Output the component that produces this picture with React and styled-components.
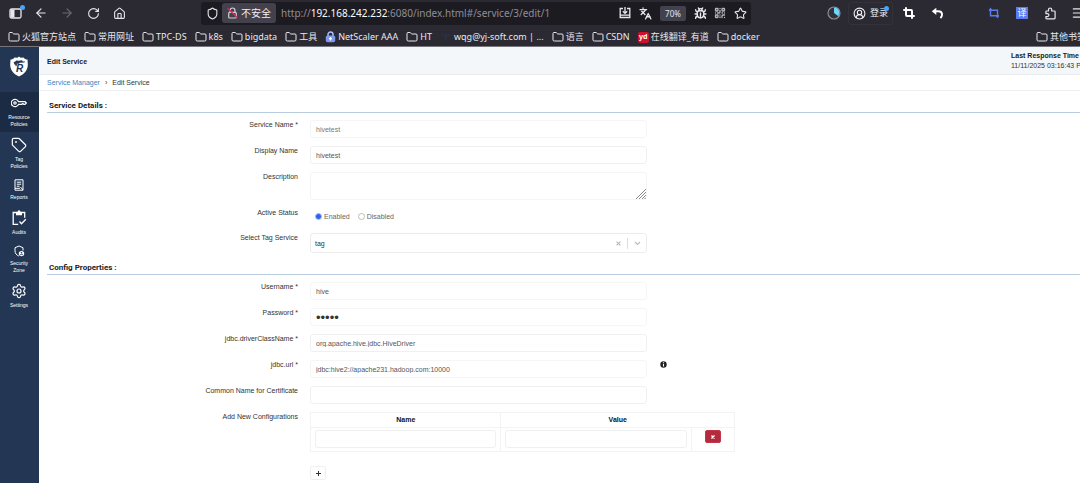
import React from "react";
import styled, { createGlobalStyle, css } from "styled-components";
import {
  ArrowLeft, ArrowRight, RotateCw, House, Shield, Folder, Bug, Star,
  CircleUserRound, Menu, Crop, Tag, Settings, QrCode, Languages,
} from "lucide-react";

const GlobalStyle = createGlobalStyle`
  * { box-sizing: border-box; }
  body {
    margin: 0;
    background: #fff;
    color: #333;
    font: 7px/9px "Liberation Sans", Arial, sans-serif;
    overflow: hidden;
  }
  button, input, select, textarea { font: inherit; color: inherit; margin: 0; }
  svg { flex: none; }
`;

/* ---------- browser window ---------- */

const Browser = styled.header`
  background: #2b2a33;
  color: #e8e8ec;
  border-bottom: 1px solid #77767d;
  font: 10px/20px "Noto Sans", "Noto Sans CJK SC", sans-serif;
  white-space: nowrap;
  overflow: hidden;
`;

const Toolbar = styled.div`
  display: flex;
  align-items: center;
  height: 26px;
  padding-left: 2px;
`;

const ToolButton = styled.button`
  flex: none;
  display: flex;
  align-items: center;
  justify-content: center;
  position: relative;
  width: ${(p) => p.$w || 26}px;
  height: 22px;
  padding: 0;
  border: 0;
  background: none;
  color: ${(p) => p.$color || "#e8e8ec"};
`;

const NavGroup = styled.nav`
  display: flex;
  flex: none;
  width: 199px;
`;

const Dot = styled.i`
  position: absolute;
  top: 3px;
  right: 3px;
  width: 5px;
  height: 5px;
  border-radius: 50%;
  background: #4aa3f5;
`;

const AddressBar = styled.div`
  flex: 1;
  min-width: 0;
  display: flex;
  align-items: center;
  height: 23px;
  padding: 0 1px;
  border-radius: 3px;
  background: #1c1b22;
`;

const Insecure = styled.button`
  flex: none;
  display: flex;
  align-items: center;
  gap: 3px;
  height: 20px;
  padding: 0 5px;
  border: 0;
  border-radius: 3px;
  background: #42414d;
  color: #f0f0f4;
`;

const Address = styled.span`
  flex: 1;
  min-width: 0;
  overflow: hidden;
  padding-left: 5px;
  color: #8f8e96;
  b { font-weight: 400; color: #fbfbfe; }
`;

const ZoomLevel = styled.button`
  flex: none;
  width: 26px;
  height: 15px;
  margin: 0 4px 0 5px;
  padding: 0;
  border: 0;
  border-radius: 2px;
  background: #42414d;
  color: #e8e8ec;
  font-size: 8px;
  line-height: 15px;
`;

const ToolGroup = styled.div`
  flex: none;
  display: flex;
  align-items: center;
  width: 329px;
  padding-left: 69px;
`;

const Account = styled.button`
  flex: none;
  position: relative;
  display: flex;
  align-items: center;
  gap: 4px;
  width: 45px;
  height: 23px;
  margin-right: 2px;
  padding: 0 4px;
  border: 1px solid #33323b;
  border-radius: 3px;
  background: none;
  color: #f0f0f4;
  font-size: 9px;
`;

const ToolSpace = styled.span`
  flex: 0 0 29px;
`;

const Translate = styled.span`
  width: 12px;
  height: 12px;
  background: #5b7cf0;
  color: #fff;
  font-size: 9px;
  line-height: 12px;
`;

const Bookmarks = styled.nav`
  display: flex;
  align-items: center;
  gap: 8px;
  height: 20px;
  padding: 2px 0 0 8px;
`;

const Bookmark = styled.a`
  flex: none;
  display: flex;
  align-items: center;
  gap: 2px;
  color: #e8e8ec;
  font-size: 9px;
  line-height: 18px;
  text-decoration: none;
  ${(p) => p.$last && css`
    width: 44px;
    margin-left: auto;
  `}
`;

const YdIcon = styled.span`
  width: 11px;
  height: 11px;
  border-radius: 2px;
  background: #cf1130;
  color: #fff;
  font-size: 7px;
  font-weight: 700;
  line-height: 10px;
  text-align: center;
`;

/* ---------- application ---------- */

const Shell = styled.div`
  display: flex;
  align-items: stretch;
  min-height: calc(100vh - 47px);
`;

const Sidebar = styled.nav`
  flex: 0 0 39px;
  background: #233755;
`;

const Brand = styled.a`
  display: flex;
  justify-content: center;
  height: 45px;
  padding: 9px 2px 0 0;
`;

const SideLink = styled.a`
  display: flex;
  flex-direction: column;
  align-items: center;
  gap: 3px;
  margin-bottom: 2px;
  padding: 3px 1px 4px 0;
  background: ${(p) => (p.$active ? "#1b2b44" : "transparent")};
  color: #fff;
  font-size: 5px;
  line-height: 7px;
  text-align: center;
  text-decoration: none;
  svg { display: block; }
`;

const Main = styled.main`
  flex: 1;
  min-width: 0;
`;

const TitleBar = styled.div`
  display: flex;
  justify-content: space-between;
  align-items: center;
  height: 28px;
  padding: 1px 0 0 8px;
  border-bottom: 1px solid #e9edef;
  background: #f3f7f9;
  overflow: hidden;
`;

const Title = styled.h1`
  margin: 0;
  font-size: 7px;
  color: #222;
`;

const Response = styled.div`
  flex: none;
  width: 69px;
  white-space: nowrap;
  line-height: 10px;
  b { display: block; color: #222; }
`;

const Crumbs = styled.nav`
  display: flex;
  align-items: center;
  gap: 5px;
  height: 16px;
  padding: 0 8px 1px;
  border-bottom: 1px solid #f0f0f0;
  a { color: #3d85bd; text-decoration: none; }
`;

const Form = styled.form`
  padding-left: 8px;
`;

const Section = styled.section`
  padding-top: 9px;
`;

const SectionTitle = styled.h2`
  margin: 0 0 7px;
  padding-left: 2px;
  border-bottom: 1px solid #b8cde0;
  color: #222;
  font: 700 8px/12px Roboto, "Liberation Sans", sans-serif;
`;

const Rows = styled.div`
  display: grid;
  gap: 8px;
`;

const Row = styled.div`
  display: grid;
  grid-template-columns: 251fr 337fr 421fr;
  column-gap: 12px;
  align-items: start;
`;

const label = css`
  color: #333;
  font-size: 7px;
  line-height: 10px;
  text-align: right;
`;

const Label = styled.label`${label}`;
const LabelText = styled.span`${label}`;

const Input = styled.input`
  display: block;
  width: 100%;
  height: 18px;
  padding: 0 5px;
  border: 1px solid ${(p) => (p.$soft ? "#f6f6f6" : "#f0f0f0")};
  border-radius: 3px;
  outline: 0;
  background: #fff;
  color: ${(p) => (p.$muted ? "#777" : "#555")};
  &[type="password"] { font-size: 13px; color: #333; }
`;

const AreaWrap = styled.div`
  position: relative;
  height: 28px;
`;

const Area = styled.textarea`
  display: block;
  width: 100%;
  height: 28px;
  padding: 4px 5px;
  border: 1px solid #f5f5f5;
  border-radius: 3px;
  outline: 0;
  resize: none;
`;

const Grip = styled.svg`
  position: absolute;
  right: 1px;
  bottom: 1px;
`;

const Radios = styled.div`
  display: flex;
  align-items: center;
  gap: 8px;
  height: 17px;
  padding-left: 5px;
`;

const RadioLabel = styled.label`
  display: flex;
  align-items: center;
  gap: 2px;
  color: #666;
`;

const Radio = styled.input`
  appearance: none;
  width: 7px;
  height: 7px;
  border: 1px solid #bbb;
  border-radius: 50%;
  background: #fff;
  &:checked {
    border-color: #a9bef6;
    background: #2f62ea;
  }
`;

const SelectBox = styled.div`
  display: flex;
  align-items: center;
  height: 20px;
  border: 1px solid #ececec;
  border-radius: 3px;
  color: #bbb;
`;

const Select = styled.select`
  flex: 1;
  min-width: 0;
  height: 18px;
  padding: 0 4px;
  border: 0;
  outline: 0;
  appearance: none;
  background: none;
  color: #333;
`;

const PlainButton = styled.button`
  display: flex;
  align-items: center;
  justify-content: center;
  width: 18px;
  height: 12px;
  padding: 0;
  border: 0;
  background: none;
`;

const Divider = styled.span`
  width: 1px;
  height: 11px;
  background: #ddd;
`;

const Info = styled.span`
  display: flex;
  padding: 1px 0 0 1px;
`;

const Wide = styled.div`
  grid-column: 2 / 4;
`;

const Table = styled.table`
  width: 425px;
  max-width: 100%;
  table-layout: fixed;
  border-collapse: collapse;
  th, td { border: 1px solid #f3f3f3; padding: 2px 4px 3px; vertical-align: top; }
  th { color: #111; }
`;

const RemoveCol = styled.col`
  width: 43px;
`;

const Remove = styled.button`
  display: flex;
  align-items: center;
  justify-content: center;
  width: 16px;
  height: 13px;
  margin: 0 auto;
  padding: 0;
  border: 1px solid #c4374b;
  border-radius: 2px;
  background: #b52b3e;
  color: #fff;
`;

const Add = styled.button`
  display: flex;
  align-items: center;
  justify-content: center;
  width: 16px;
  height: 14px;
  margin-top: 14px;
  padding: 0;
  border: 1px solid #f0f0f0;
  border-radius: 2px;
  background: #fff;
  color: #333;
`;

/* ---------- drawings ---------- */

const SidebarToggle = () => (
  <svg width="13" height="11" viewBox="0 0 13 11">
    <rect x="1" y="1" width="11" height="9" rx="1.5" fill="none" stroke="#e8e8ec" strokeWidth="1.3" />
    <rect x="1.5" y="1.5" width="4" height="8" fill="#e8e8ec" />
  </svg>
);

const LockOff = () => (
  <svg width="11" height="12" viewBox="0 0 11 12" fill="none">
    <path d="M3 5V3.5a2.5 2.5 0 0 1 5 0V5" stroke="#cfcfd6" strokeWidth="1.2" />
    <rect x="1.7" y="5.4" width="7.6" height="5.6" rx="1" stroke="#cfcfd6" strokeWidth="1.2" />
    <path d="M0.5 1.2l10 9.5" stroke="#e22850" strokeWidth="1.3" />
  </svg>
);

const SaveIcon = () => (
  <svg width="12" height="12" viewBox="0 0 12 12" fill="none" stroke="#e8e8ec" strokeWidth="1.3">
    <path d="M4 1.5H1.2v9h9.6v-9H8M6 0v6M3.8 4.2L6 6.4l2.2-2.2M1.2 8.2h9.6" />
  </svg>
);

const Pie = () => (
  <svg width="14" height="14" viewBox="0 0 14 14">
    <circle cx="7" cy="7" r="6" fill="#32313b" stroke="#8d8c95" strokeWidth="1.2" />
    <path d="M7 7V1.6a5.4 5.4 0 0 1 4.4 8.6z" fill="#6fd6f7" />
  </svg>
);

const Undo = () => (
  <svg width="12" height="12" viewBox="0 0 12 12" fill="none">
    <path d="M4 4.3h3.2c5 0 4.4 4.6 2.2 6.7" stroke="#fff" strokeWidth="1.9" />
    <path d="M5.3.7v7.2L.8 4.3z" fill="#fff" />
  </svg>
);

const Region = () => (
  <svg width="12" height="12" viewBox="0 0 12 12" fill="none" stroke="#5b7cf0" strokeWidth="1.4">
    <path d="M2.500 1.500v7.300H11M1 3.200h8.500v7.300" />
    <path d="M.8 3.200L2.500.5l1.700 2.700zM7.800 8.800l1.700 2.700 1.700-2.700z" fill="#5b7cf0" stroke="none" />
  </svg>
);

const Extension = () => (
  <svg width="12" height="13" viewBox="0 0 12 13" fill="none" stroke="#e8e8ec" strokeWidth="1.2" strokeLinejoin="round">
    <path d="M4.500 4V2.600a1.600 1.600 0 0 1 3.200 0V4h2.600q.8 0 .8.800v6.300q0 .8-.8.800H2.700q-.8 0-.8-.8V9.600h1.500a1.500 1.500 0 0 0 0-3H1.900V4.800q0-.8.8-.8z" />
  </svg>
);

const PadlockBadge = () => (
  <svg width="11" height="12" viewBox="0 0 11 12">
    <path d="M3 5V3.500a2.500 2.500 0 0 1 5 0V5" fill="none" stroke="#a9bdf5" strokeWidth="1.5" />
    <rect x=".8" y="4.5" width="9.4" height="6.8" rx="1.8" fill="#7f9aec" />
    <path d="M5.500 6v3.500M4 7.700h3" stroke="#fff" strokeWidth="1.2" />
  </svg>
);

const Faint = () => (
  <svg width="12" height="11" viewBox="0 0 12 11">
    <path d="M2 3h3l1 1.500L7 3h3M6 5v4" fill="none" stroke="#293049" strokeWidth="1.5" />
  </svg>
);

const Logo = () => (
  <svg width="20" height="21" viewBox="0 0 20 21">
    <path d="M10 .5l1.500 1.300 3-.3c1 1.500 2.500 2 4 2l.3 5c0 6-3.500 9.500-8.800 12C4.700 18 1.200 14.500 1.200 8.500l.3-5c1.500 0 3-.5 4-2l3 .3z" fill="#fff" />
    <path d="M4.500 6.300l2.200-1 .4-.9 2.700.4 3.200-.6.8 1.300 2.200.1-.5 1-4.700.2-.8 1H7.600l.6 1.500-1.500 1-.5-1.700-1.300-.4.3-1.100z" fill="#233755" />
    <text x="7" y="15.500" fill="#233755" fontFamily="Liberation Sans" fontStyle="italic" fontWeight="700" fontSize="10">R</text>
  </svg>
);

const KeyIcon = () => (
  <svg width="16" height="16" viewBox="0 0 16 16" fill="none" stroke="#fff" strokeWidth="1.2">
    <path d="M7.600 6.700a3.800 3.600 0 1 0 0 2.600h3.200l1-.8 1 .8h1.200L15.400 8 14 6.700z" />
    <circle cx="4" cy="8" r="1.2" />
  </svg>
);

const ReportIcon = () => (
  <svg width="12" height="12" viewBox="0 0 12 12" fill="none" stroke="#fff">
    <path d="M2 .8h8v10.400H2zM3.800 3.200h4.400M3.800 5.200h4.400M3.800 7.200h2.700M2 9.300h5M7.500 8l2.500 3" />
  </svg>
);

const AuditIcon = () => (
  <svg width="16" height="16" viewBox="0 0 16 16" fill="none" stroke="#fff" strokeWidth="1.3">
    <path d="M5 2.500H2.200v11.800h5M11 2.500h2.700v5.200M8.500 11.500l2 2.200 4.300-4.500" />
    <path d="M5 1.800h1.500a1.500 1.500 0 0 1 3 0H11v3.500H5z" fill="#fff" stroke="none" />
  </svg>
);

const ZoneIcon = () => (
  <svg width="12" height="12" viewBox="0 0 12 12" fill="none" stroke="#fff">
    <path d="M10 5.500V2.700L6 1 2 2.700v3.100c0 2.500 1.400 4.300 3.800 5.200" />
    <circle cx="8.500" cy="8.600" r="2.700" fill="#fff" stroke="none" />
    <circle cx="8.500" cy="7.700" r=".8" fill="#233755" stroke="none" />
    <path d="M7.200 9.800q1.300-1 2.600 0" stroke="#233755" />
  </svg>
);

const Cross = ({ size = 5, width = 1.5 }) => (
  <svg width={size} height={size} viewBox="0 0 6 6" stroke="currentColor" strokeWidth={width}>
    <path d="M.7.700l4.600 4.600M5.300.7L.7 5.300" />
  </svg>
);

const Chevron = () => (
  <svg width="7" height="5" viewBox="0 0 7 5" fill="none" stroke="currentColor" strokeWidth="1.2">
    <path d="M1 1l2.500 2.500L6 1" />
  </svg>
);

const bookmarks = [
  ["火狐官方站点"], ["常用网址"], ["TPC-DS"], ["k8s"], ["bigdata"], ["工具"],
  ["NetScaler AAA", <PadlockBadge />], ["HT"], ["wqg@yj-soft.com | ...", <Faint />],
  ["语言"], ["CSDN"], ["在线翻译_有道", <YdIcon>yd</YdIcon>], ["docker"],
];

const sideLinks = [
  [["Resource", "Policies"], <KeyIcon />],
  [["Tag", "Policies"], <Tag size={16} strokeWidth={1.8} />],
  [["Reports"], <ReportIcon />],
  [["Audits"], <AuditIcon />],
  [["Security", "Zone"], <ZoneIcon />],
  [["Settings"], <Settings size={16} strokeWidth={1.8} />],
];

const FolderIcon = () => <Folder size={12} strokeWidth={2} />;

function Field({ id, text, info, ...rest }) {
  return (
    <Row>
      <Label htmlFor={id}>{text}</Label>
      <Input id={id} {...rest} />
      {info && (
        <Info>
          <svg width="7" height="7" viewBox="0 0 7 7" role="img" aria-label="Info">
            <circle cx="3.500" cy="3.500" r="3.2" fill="#222" />
            <path d="M3.500 1.200v1M3.500 3v2.600" stroke="#fff" strokeWidth="1.1" />
          </svg>
        </Info>
      )}
    </Row>
  );
}

export default function App() {
  return (
    <>
      <GlobalStyle />
      <Browser>
        <Toolbar>
          <NavGroup>
            <ToolButton aria-label="Sidebar"><SidebarToggle /><Dot /></ToolButton>
            <ToolButton aria-label="Back"><ArrowLeft size={14} /></ToolButton>
            <ToolButton aria-label="Forward" $color="#6b6a72"><ArrowRight size={14} /></ToolButton>
            <ToolButton aria-label="Reload"><RotateCw size={13} /></ToolButton>
            <ToolButton aria-label="Home"><House size={13} /></ToolButton>
          </NavGroup>
          <AddressBar>
            <ToolButton $w={20} aria-label="Protection"><Shield size={13} /></ToolButton>
            <Insecure><LockOff />不安全</Insecure>
            <Address>http://<b>192.168.242.232</b>:6080/index.html#/service/3/edit/1</Address>
            <ToolButton $w={20} aria-label="Save page"><SaveIcon /></ToolButton>
            <ToolButton $w={20} aria-label="Translate"><Languages size={13} strokeWidth={2.4} /></ToolButton>
            <ZoomLevel>70%</ZoomLevel>
            <ToolButton $w={20} aria-label="Debug"><Bug size={13} strokeWidth={2.6} /></ToolButton>
            <ToolButton $w={20} aria-label="QR code" $color="#b9b8c0"><QrCode size={12} strokeWidth={2.6} /></ToolButton>
            <ToolButton $w={20} aria-label="Bookmark"><Star size={13} /></ToolButton>
          </AddressBar>
          <ToolGroup>
            <ToolButton $w={28} aria-label="Usage"><Pie /></ToolButton>
            <Account><CircleUserRound size={13} />登录<Dot /></Account>
            <ToolButton $w={28} aria-label="Crop" $color="#fff"><Crop size={12} strokeWidth={4} /></ToolButton>
            <ToolButton $w={28} aria-label="Undo"><Undo /></ToolButton>
            <ToolSpace />
            <ToolButton $w={28} aria-label="Capture"><Region /></ToolButton>
            <ToolButton $w={28}><Translate>译</Translate></ToolButton>
            <ToolButton $w={28} aria-label="Extensions"><Extension /></ToolButton>
            <ToolButton $w={28} aria-label="Menu"><Menu size={14} /></ToolButton>
          </ToolGroup>
        </Toolbar>
        <Bookmarks>
          {bookmarks.map(([name, icon]) => (
            <Bookmark href="#" key={name}>{icon || <FolderIcon />}{name}</Bookmark>
          ))}
          <Bookmark href="#" $last><FolderIcon />其他书签</Bookmark>
        </Bookmarks>
      </Browser>
      <Shell>
        <Sidebar>
          <Brand href="#" aria-label="Ranger"><Logo /></Brand>
          {sideLinks.map(([lines, icon], i) => (
            <SideLink href="#" key={lines.join(" ")} $active={i === 0}>
              {icon}
              <span>{lines[0]}{lines[1] && <><br />{lines[1]}</>}</span>
            </SideLink>
          ))}
        </Sidebar>
        <Main>
          <TitleBar>
            <Title>Edit Service</Title>
            <Response><b>Last Response Time</b>11/11/2025 03:16:43 PM</Response>
          </TitleBar>
          <Crumbs>
            <a href="#">Service Manager</a><span>›</span><span>Edit Service</span>
          </Crumbs>
          <Form>
            <Section>
              <SectionTitle>Service Details :</SectionTitle>
              <Rows>
                <Field id="name" text="Service Name *" defaultValue="hivetest" $soft $muted />
                <Field id="display" text="Display Name" defaultValue="hivetest" />
                <Row>
                  <Label htmlFor="description">Description</Label>
                  <AreaWrap>
                    <Area id="description" />
                    <Grip width="10" height="10" viewBox="0 0 10 10" stroke="#888">
                      <path d="M0 10L10 0M3 10l7-7M6 10l4-4M8.500 10l1.500-1.500" />
                    </Grip>
                  </AreaWrap>
                </Row>
                <Row>
                  <LabelText id="status">Active Status</LabelText>
                  <Radios role="radiogroup" aria-labelledby="status">
                    <RadioLabel><Radio type="radio" name="status" defaultChecked />Enabled</RadioLabel>
                    <RadioLabel><Radio type="radio" name="status" />Disabled</RadioLabel>
                  </Radios>
                </Row>
                <Row>
                  <Label htmlFor="tag">Select Tag Service</Label>
                  <SelectBox>
                    <Select id="tag"><option>tag</option></Select>
                    <PlainButton type="button" aria-label="Clear"><Cross /></PlainButton>
                    <Divider />
                    <PlainButton as="span"><Chevron /></PlainButton>
                  </SelectBox>
                </Row>
              </Rows>
            </Section>
            <Section>
              <SectionTitle>Config Properties :</SectionTitle>
              <Rows>
                <Field id="user" text="Username *" defaultValue="hive" $soft />
                <Field id="password" text="Password *" type="password" defaultValue="abcde" $soft />
                <Field id="driver" text="jdbc.driverClassName *" defaultValue="org.apache.hive.jdbc.HiveDriver" />
                <Field id="url" text="jdbc.url *" defaultValue="jdbc:hive2://apache231.hadoop.com:10000" $soft info />
                <Field id="cert" text="Common Name for Certificate" />
                <Row>
                  <LabelText>Add New Configurations</LabelText>
                  <Wide>
                    <Table>
                      <colgroup><col /><col /><RemoveCol /></colgroup>
                      <thead><tr><th>Name</th><th colSpan={2}>Value</th></tr></thead>
                      <tbody>
                        <tr>
                          <td><Input aria-label="Name" /></td>
                          <td><Input aria-label="Value" /></td>
                          <td><Remove type="button" aria-label="Remove"><Cross size={4} width={2} /></Remove></td>
                        </tr>
                      </tbody>
                    </Table>
                    <Add type="button" aria-label="Add">
                      <svg width="5" height="5" viewBox="0 0 5 5" stroke="currentColor"><path d="M2.500 0v5M0 2.500h5" /></svg>
                    </Add>
                  </Wide>
                </Row>
              </Rows>
            </Section>
          </Form>
        </Main>
      </Shell>
    </>
  );
}
